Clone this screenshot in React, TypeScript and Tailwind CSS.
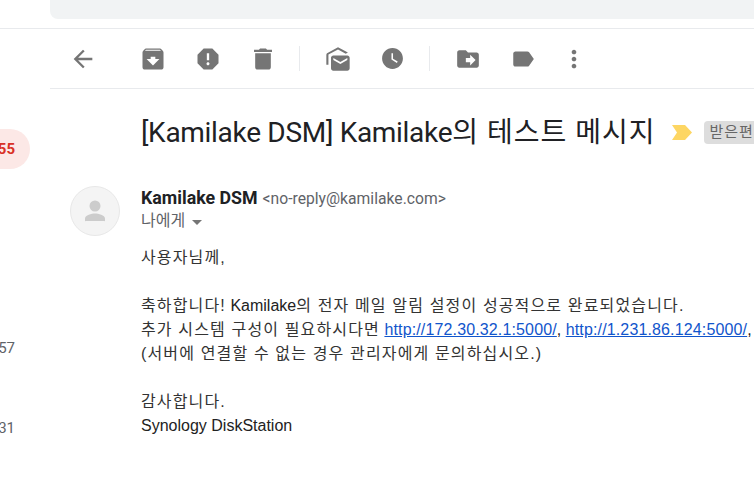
import React from 'react';

const Icon = ({ d, size = 28 }: { d: string; size?: number }) => (
  <svg width={size} height={size} viewBox="0 0 24 24" className="fill-[#757575]">
    <path d={d} />
  </svg>
);

const ToolButton = ({ d, size, className = 'w-[55px]' }: { d: string; size?: number; className?: string }) => (
  <div className={`flex items-center justify-center h-full ${className}`}>
    <Icon d={d} size={size} />
  </div>
);

const Divider = () => <div className="w-px h-[25px] bg-[#e8eaed] ml-[9px] mr-[10px]" />;

// hangul runs are set wider than the latin around them
const K = ({ children }: { children: React.ReactNode }) => (
  <span className="tracking-[1.15px] text-[#333333]">{children}</span>
);

const Link = ({ children }: { children: React.ReactNode }) => (
  <a className="text-[#1155cc] underline tracking-[0.14px]">{children}</a>
);

const icons = {
  back: 'M20 11H7.83l5.59-5.59L12 4l-8 8 8 8 1.41-1.41L7.83 13H20v-2z',
  archive:
    'M20.54 5.23l-1.39-1.68C18.88 3.21 18.47 3 18 3H6c-.47 0-.88.21-1.16.55L3.46 5.23C3.17 5.57 3 6.02 3 6.5V19c0 1.1.9 2 2 2h14c1.1 0 2-.9 2-2V6.5c0-.48-.17-.93-.46-1.27zM12 17.5L6.5 12H10v-2h4v2h3.5L12 17.5zM5.12 5l.81-1h12l.94 1H5.12z',
  report:
    'M15.73 3H8.27L3 8.27v7.46L8.27 21h7.46L21 15.73V8.27L15.73 3zM12 17.3c-.72 0-1.3-.58-1.3-1.3 0-.72.58-1.3 1.3-1.3.72 0 1.3.58 1.3 1.3 0 .72-.58 1.3-1.3 1.3zm1-4.3h-2V7h2v6z',
  trash: 'M5.3 19c0 1.1.9 2 2 2h9.4c1.1 0 2-.9 2-2V7H5.3v12zM19.7 4h-4.2l-1-1h-5l-1 1H4.3v2h15.4V4z',
  unread:
    'M12 2 3 6.8C2.4 7.1 2 7.8 2 8.5V17h1.8V8.2L12 3.9l6.6 3.5 1.9-1L12 2zM8 9c-1.1 0-2 .9-2 2v9c0 1.1.9 2 2 2h12c1.1 0 2-.9 2-2v-9c0-1.1-.9-2-2-2H8zm6 7.2-6-3.4v-1.7l6 3.4 6-3.4v1.7l-6 3.4z',
  clock:
    'M12 2C6.5 2 2 6.5 2 12s4.5 10 10 10 10-4.5 10-10S17.5 2 12 2zm4.2 14.2L11 13V7h1.5v5.2l4.5 2.7-.8 1.3z',
  move: 'M20 6h-8l-2-2H4c-1.1 0-1.99.9-1.99 2L2 18c0 1.1.9 2 2 2h16c1.1 0 2-.9 2-2V8c0-1.1-.9-2-2-2zm-6 12v-3h-4v-4h4V8l5 5-5 5z',
  label:
    'M17.63 5.84C17.27 5.33 16.67 5 16 5L5 5.01C3.9 5.01 3 5.9 3 7v10c0 1.1.9 1.99 2 1.99L16 19c.67 0 1.27-.33 1.63-.84L22 12l-4.37-6.16z',
  more: 'M12 8c1.1 0 2-.9 2-2s-.9-2-2-2-2 .9-2 2 .9 2 2 2zm0 2c-1.1 0-2 .9-2 2s.9 2 2 2 2-.9 2-2-.9-2-2-2zm0 6c-1.1 0-2 .9-2 2s.9 2 2 2 2-.9 2-2-.9-2-2-2z',
};

const App = () => {
  return (
    <div className="w-[754px] h-[495px] overflow-hidden bg-white font-['Roboto','Noto_Sans_CJK_KR',sans-serif]">
      <div className="h-[29px] border-b border-[#e8eaed] pl-[50px]">
        <div className="h-[19px] bg-[#f1f3f4] rounded-bl-lg" />
      </div>

      <div className="flex">
        {/* cut-off mail list */}
        <div className="w-[50px] shrink-0 text-[15px] text-[#5f6368]">
          <div className="h-[100px]" />
          <div className="w-[30px] h-10 rounded-r-[20px] bg-[#fce8e6] flex items-center justify-end pr-[15px] font-bold text-[#d93025]">
            <span>55</span>
          </div>
          <div className="h-[169px]" />
          <div className="w-[15px] h-5 leading-5 flex justify-end">57</div>
          <div className="h-[60px]" />
          <div className="w-[15px] h-5 leading-5 flex justify-end">31</div>
        </div>

        <div className="flex-1 min-w-0">
          <div className="h-[60px] border-b border-[#e8eaed] flex items-center">
            <ToolButton d={icons.back} className="w-[65px] mr-[10px]" />
            <ToolButton d={icons.archive} />
            <ToolButton d={icons.report} />
            <ToolButton d={icons.trash} />
            <Divider />
            <ToolButton d={icons.unread} />
            <ToolButton d={icons.clock} size={25} />
            <Divider />
            <ToolButton d={icons.move} size={26} />
            <ToolButton d={icons.label} size={26} />
            <ToolButton d={icons.more} className="w-[47px]" />
          </div>

          <div className="pl-[91px] pt-[23px] flex items-center h-[64px] whitespace-nowrap overflow-hidden">
            <h1 className="text-[28px] leading-10 text-[#202124]">
              <span className="tracking-[-0.3px]">[Kamilake DSM] Kamilake</span>
              <span className="tracking-[1px]">의 테스트 메시지</span>
            </h1>
            <svg width="20" height="15" viewBox="0 0 20 15" className="ml-[17px] shrink-0 fill-[#fdd663]">
              <path d="M0 0h13l7 7.5-7 7.5H0l5-7.5z" />
            </svg>
            <span className="ml-[12px] shrink-0 h-[23px] px-[5px] rounded bg-[#dddddd] text-[#666666] text-[15px] leading-[23px] tracking-[1px]">받은편지함</span>
          </div>

          <div className="flex pl-5 pt-[33px]">
            <div className="w-[50px] h-[50px] rounded-full bg-[#f4f4f4] border border-[#e8e8e8] flex items-center justify-center shrink-0">
              <svg width="24" height="24" viewBox="0 0 24 24" className="fill-[#cccccc]">
                <circle cx="12" cy="7" r="5.5" />
                <path d="M2 22v-2.5c0-3.3 6.7-5 10-5s10 1.700 10 5V22a1 1 0 0 1-1 0H3a1 1 0 0 1-1 0z" />
              </svg>
            </div>
            <div className="ml-[21px] -mt-px whitespace-nowrap">
              <div className="h-[25px] flex items-baseline">
                <span className="text-[17.8px] font-bold text-[#202124]">Kamilake DSM</span>
                <span className="ml-[5px] text-[15.7px] text-[#5f6368]">&lt;no-reply@kamilake.com&gt;</span>
              </div>
              <div className="h-[22px] flex items-center text-base text-[#5f6368]">
                나에게
                <span className="ml-[7px] mt-[2px] w-0 h-0 border-x-[5px] border-t-[5px] border-x-transparent border-t-[#757575]" />
              </div>
              <div className="mt-[14px] text-base leading-6 text-[#222222] font-['Liberation_Sans','Noto_Sans_CJK_KR',sans-serif]">
                <p><K>사용자님께,</K></p>
                <p className="mt-6"><K>축하합니다!</K> Kamilake<K>의 전자 메일 알림 설정이 성공적으로 완료되었습니다.</K></p>
                <p>
                  <K>추가 시스템 구성이 필요하시다면</K> <Link>http://172.30.32.1:5000/</Link>, <Link>http://1.231.86.124:5000/</Link>,
                </p>
                <p><K>(서버에 연결할 수 없는 경우 관리자에게 문의하십시오.)</K></p>
                <p className="mt-6"><K>감사합니다.</K></p>
                <p>Synology DiskStation</p>
              </div>
            </div>
          </div>
        </div>
      </div>
    </div>
  );
};

export default App;
